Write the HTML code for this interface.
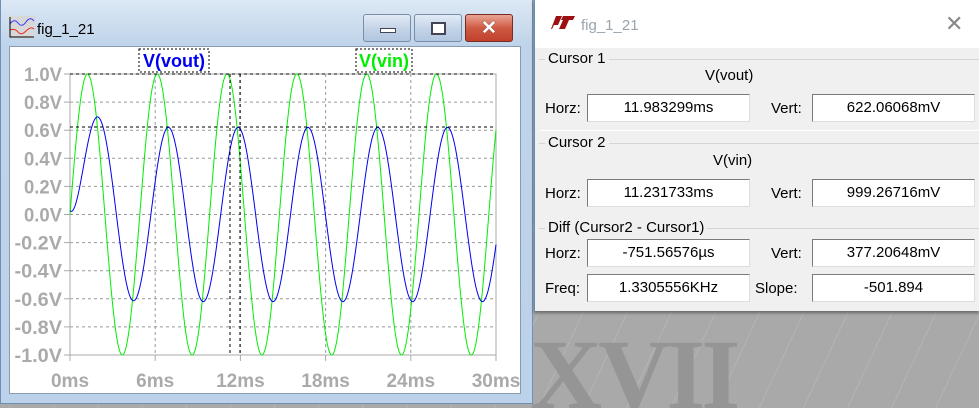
<!DOCTYPE html>
<html><head><meta charset="utf-8">
<style>
*{margin:0;padding:0;box-sizing:border-box}
html,body{width:979px;height:408px;overflow:hidden}
body{background:#a9a9a9;font-family:"Liberation Sans",sans-serif;position:relative}
.bg{position:absolute;left:0;top:0;width:979px;height:408px;background:repeating-linear-gradient(115deg,#a9a9a9 0 20px,#b4b4b4 20px 21px,#a9a9a9 21px 40px)}
.xvii{position:absolute;left:530px;top:325px;font-family:"Liberation Serif",serif;font-weight:bold;font-size:100px;color:#959595;letter-spacing:-4px;line-height:1}
.win{position:absolute;left:0;top:0;width:533px;height:404px;background:linear-gradient(#dce8f5,#bfd4ea 45px,#bcd2ea);border:1px solid #6f8fb5;border-top:none}
.title{position:absolute;left:36px;top:21px;font-size:15px;color:#000}
.btn{position:absolute;top:14px;height:28px;border:1px solid #7a8da8;border-radius:3px;background:linear-gradient(#e2ebf6,#c5d5e8 50%,#b2c6df)}
.plot{position:absolute;left:8px;top:46px;width:512px;height:348px;background:#fff;border:1px solid #8a9bb0}
.cw{position:absolute;left:534px;top:0;width:445px;height:311px;background:#f0f0f0;border-left:1px solid #5d8fb7;box-shadow:0 2px 3px rgba(0,0,0,.4)}
.ct{position:absolute;left:0;top:0;width:445px;height:48px;background:#fff}
.lbl{position:absolute;font-size:15px;color:#000}
.box{position:absolute;width:163px;height:28px;background:#fff;border:1px solid #7a7a7a;border-right-color:#ddd;border-bottom-color:#ddd;font-size:15px;text-align:center;line-height:26px}
.grp{position:absolute;left:4px;width:441px;border-top:1px solid #d5d5d5}
</style></head><body>
<div class="bg"></div>
<div class="xvii">XVII</div>
<div class="win">
 <svg style="position:absolute;left:8px;top:16px" width="26" height="22"><rect x="0" y="0" width="26" height="22" fill="#d8d8d8"/><path d="M1 8 Q5 2 9 7 T17 6 T25 5" stroke="#33f" fill="none"/><path d="M1 14 Q6 12 9 16 T17 15 T25 13" stroke="#e22" fill="none"/><path d="M1 1 V21 H25" stroke="#000" fill="none"/></svg>
 <div class="title">fig_1_21</div>
 <div class="btn" style="left:362px;width:48px"><div style="position:absolute;left:16px;top:13px;width:16px;height:5px;background:#fff;border:1px solid #445"></div></div>
 <div class="btn" style="left:413px;width:48px"><div style="position:absolute;left:16px;top:7px;width:15px;height:13px;border:2px solid #445;background:#fff"></div></div>
 <div class="btn" style="left:464px;width:48px;background:linear-gradient(#e9a696,#cf5a44 50%,#c0402c);border-color:#7b2b20"><div style="position:absolute;left:0;top:2px;width:46px;text-align:center;color:#fff;font-weight:bold;font-size:19px;text-shadow:0 0 1px #333">✕</div></div>
 <div class="plot"></div>
 <svg id="pl" style="position:absolute;left:0;top:0" width="533" height="404"></svg>
</div>
<div class="cw">
 <div class="ct">
  <svg style="position:absolute;left:16px;top:16px" width="24" height="14"><path d="M5 0 H11 L7 9 H3 L1 13 H8 L12 4 H10 L12 0 H24 L22 4 H18 L14 13 H0 Z" fill="#9b1010"/></svg>
  <div style="position:absolute;left:46px;top:17px;font-size:15px;color:#9aa4ad">fig_1_21</div>
  <div style="position:absolute;left:410px;top:11px;font-size:22px;color:#888">✕</div>
 </div>
 <div class="grp" style="top:59px"></div><div class="lbl" style="left:10px;top:50px;background:#f0f0f0;padding:0 3px">Cursor 1</div>
 <div class="lbl" style="left:170px;top:67px">V(vout)</div>
 <div class="lbl" style="left:10px;top:100px">Horz:</div><div class="box" style="left:52px;top:94px">11.983299ms</div>
 <div class="lbl" style="left:236px;top:100px">Vert:</div><div class="box" style="left:277px;top:94px">622.06068mV</div>
 <div class="grp" style="top:130px;border-top:1px solid #fff"></div>
 <div class="grp" style="top:143px"></div><div class="lbl" style="left:10px;top:134px;background:#f0f0f0;padding:0 3px">Cursor 2</div>
 <div class="lbl" style="left:178px;top:152px">V(vin)</div>
 <div class="lbl" style="left:10px;top:185px">Horz:</div><div class="box" style="left:52px;top:179px">11.231733ms</div>
 <div class="lbl" style="left:236px;top:185px">Vert:</div><div class="box" style="left:277px;top:179px">999.26716mV</div>
 <div class="grp" style="top:228px"></div><div class="lbl" style="left:10px;top:219px;background:#f0f0f0;padding:0 3px">Diff (Cursor2 - Cursor1)</div>
 <div class="lbl" style="left:10px;top:245px">Horz:</div><div class="box" style="left:52px;top:239px">-751.56576µs</div>
 <div class="lbl" style="left:236px;top:245px">Vert:</div><div class="box" style="left:277px;top:239px">377.20648mV</div>
 <div class="lbl" style="left:10px;top:280px">Freq:</div><div class="box" style="left:52px;top:274px">1.3305556KHz</div>
 <div class="lbl" style="left:220px;top:280px">Slope:</div><div class="box" style="left:277px;top:274px">-501.894</div>
</div>
<script>
var s=document.getElementById('pl'),h='';
var X0=69,X1=495,Y0=74,Y1=355;
function y(v){return Y0+(1-v)/2*(Y1-Y0);}
var labs=['1.0V','0.8V','0.6V','0.4V','0.2V','0.0V','-0.2V','-0.4V','-0.6V','-0.8V','-1.0V'];
for(var i=0;i<=10;i++){var yy=Y0+i*(Y1-Y0)/10;
 h+='<line x1="'+(X0-6)+'" x2="'+X0+'" y1="'+yy+'" y2="'+yy+'" stroke="#aaa"/>';
 if(i>0&&i<10)h+='<line x1="'+X0+'" x2="'+X1+'" y1="'+yy+'" y2="'+yy+'" stroke="#999" stroke-dasharray="3,3"/>';
 h+='<text x="'+(X0-8)+'" y="'+(yy+7)+'" text-anchor="end" font-family="Liberation Sans" font-weight="bold" font-size="19" fill="#aaa" textLength="'+(labs[i].length*9.5)+'" lengthAdjust="spacingAndGlyphs">'+labs[i]+'</text>';}
for(var j=0;j<=5;j++){var xx=X0+j*(X1-X0)/5;
 h+='<line x1="'+xx+'" x2="'+xx+'" y1="'+Y1+'" y2="'+(Y1+6)+'" stroke="#aaa"/>';
 if(j>0&&j<5)h+='<line x1="'+xx+'" x2="'+xx+'" y1="'+Y0+'" y2="'+Y1+'" stroke="#999" stroke-dasharray="3,3"/>';
 h+='<text x="'+xx+'" y="'+(Y1+32)+'" text-anchor="middle" font-family="Liberation Sans" font-weight="bold" font-size="19" fill="#aaa">'+(j*6)+'ms</text>';}
h+='<rect x="'+X0+'" y="'+Y0+'" width="'+(X1-X0)+'" height="'+(Y1-Y0)+'" fill="none" stroke="#aaa"/>';
var P=69.8,g='',b='';
for(var x=X0;x<=X1;x+=0.5){var t=(x-X0)/P*2*Math.PI;
 g+=(x==X0?'M':'L')+x+' '+y(Math.sin(t)).toFixed(1);
 var v=0.62*Math.sin(t-1.0)+0.55*Math.exp(-(x-X0)/14);
 b+=(x==X0?'M':'L')+x+' '+y(v).toFixed(1);}
h+='<path d="'+g+'" stroke="#00ee00" fill="none" stroke-width="1"/>';
h+='<path d="'+b+'" stroke="#0000ee" fill="none" stroke-width="1"/>';
h+='<line x1="229" x2="229" y1="'+Y0+'" y2="'+Y1+'" stroke="#000" stroke-dasharray="3,3"/>';
h+='<line x1="239" x2="239" y1="'+Y0+'" y2="'+Y1+'" stroke="#000" stroke-dasharray="3,3"/>';
h+='<line x1="'+X0+'" x2="'+X1+'" y1="127" y2="127" stroke="#000" stroke-dasharray="3,3"/>';
h+='<line x1="'+X0+'" x2="'+X1+'" y1="'+Y0+'" y2="'+Y0+'" stroke="#000" stroke-dasharray="3,3"/>';
h+='<rect x="138" y="49" width="70" height="23" fill="none" stroke="#000" stroke-dasharray="2,2"/>';
h+='<text x="173" y="67" text-anchor="middle" font-family="Liberation Sans" font-weight="bold" font-size="18" fill="#0000ee">V(vout)</text>';
h+='<rect x="355" y="49" width="56" height="23" fill="none" stroke="#000" stroke-dasharray="2,2"/>';
h+='<text x="383" y="67" text-anchor="middle" font-family="Liberation Sans" font-weight="bold" font-size="18" fill="#00ee00">V(vin)</text>';
s.innerHTML=h;
</script>
</body></html>
